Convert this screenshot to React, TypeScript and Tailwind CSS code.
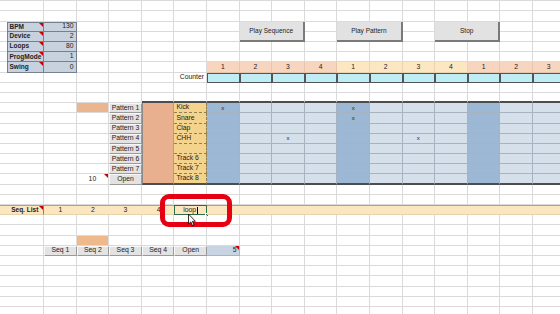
import React from 'react';

type Cell = {
  cls: string;
  text?: React.ReactNode;
  tri?: boolean;
  extra?: React.ReactNode;
};

const labels = ['BPM', 'Device', 'Loops', 'ProgMode', 'Swing'];
const values = ['130', '2', '80', '1', '0'];
const tracks = ['Kick', 'Snare', 'Clap', 'CHH', '', 'Track 6', 'Track 7', 'Track 8'];
const marks = ['10:7', '10:11', '11:11', '13:9', '13:13'];

const grid = 'border-r border-b border-[#dadada]';
const btn =
  'justify-center bg-[#e3e3e3] border-t border-l border-r border-b border-t-[#f8f8f8] border-l-[#f8f8f8] border-r-[#9a9a9a] border-b-[#9a9a9a]';
const band = 'bg-[#fbe6c0] border-t border-b border-t-[#aea38e] border-b-[#e5d3ae]';

// columns: 0 = sliver, 1 = A, 2 = B ... 6 = F, 7..17 = G..Q
// rows: -1 = sliver at the top, 0..30
function cellAt(r: number, c: number): Cell | null {
  // covered by merged cells
  if ((r === 2 || r === 3) && (c === 9 || c === 12 || c === 15)) return null;
  if (r === 3 && (c === 8 || c === 11 || c === 14)) return null;
  if (c === 5 && r >= 11 && r <= 17) return null;

  if (r === 20) {
    if (c === 1) return { cls: `${band} border-r border-r-[#8a7f6c] justify-center font-bold text-[6.5px]`, text: 'Seq. List', tri: true };
    if (c >= 2 && c <= 4) return { cls: `${band} justify-center`, text: String(c - 1) };
    if (c === 5) return { cls: `${band} justify-center pl-[1px]`, text: '4' };
    if (c === 6)
      return {
        cls: 'bg-[#fbe6c0] border-[1.5px] border-[#2f6b43] justify-center',
        text: (
          <>
            loop<span className="ml-px inline-block w-px h-[7px] bg-black" />
          </>
        ),
        extra: <span className="absolute -right-[3px] -bottom-[3px] w-[4px] h-[4px] bg-[#2f6b43] border border-white" />,
      };
    return { cls: band };
  }

  if (c === 0) return { cls: 'border-b border-[#dadada]' };
  if (r === -1) return { cls: grid };

  if (r === 2 && (c === 8 || c === 11 || c === 14)) {
    const label = c === 8 ? 'Play Sequence' : c === 11 ? 'Play Pattern' : 'Stop';
    return {
      cls: 'col-span-2 row-span-2 justify-center text-[6.5px] bg-[#e2e2e2] border-r-2 border-b-2 border-r-[#7a7a7a] border-b-[#7a7a7a]',
      text: label,
    };
  }

  if (r >= 2 && r <= 6 && c === 1)
    return {
      cls: `bg-[#c8d2df] border-l border-r border-b border-[#76818f] justify-start pl-[2px] font-bold text-[6.5px] ${r === 2 ? 'border-t' : ''}`,
      text: labels[r - 2],
      tri: true,
    };
  if (r >= 2 && r <= 6 && c === 2)
    return {
      cls: `bg-[#c8d2df] border-r border-b border-[#76818f] justify-end pr-[2px] ${r === 2 ? 'border-t' : ''}`,
      text: values[r - 2],
    };

  if (r === 6 && c >= 7) {
    const yellow = Math.floor((c - 7) / 4) === 1;
    return {
      cls: `${yellow ? 'bg-[#fde7c3] border-[#ecd4b0]' : 'bg-[#f8d5be] border-[#e8c4ad]'} border-r border-b justify-center`,
      text: String(((c - 7) % 4) + 1),
    };
  }

  if (r === 7 && c === 6) return { cls: `${grid} justify-end pr-[2px]`, text: 'Counter' };
  if (r === 7 && c >= 7) return { cls: 'bg-[#bfedf6] border border-[#555555]' };

  if (r === 9 && c >= 5) return { cls: 'border-r border-b-2 border-r-[#dadada] border-b-[#4d4d4d]' };

  if (r >= 10 && r <= 17) {
    if (c === 3 && r === 10) return { cls: `${grid} bg-[#ebb68f]` };
    if (c === 3 && r === 17) return { cls: `${grid} justify-center`, text: '10', tri: true };
    if (c === 4) return { cls: btn, text: r === 17 ? 'Open' : `Pattern ${r - 9}` };
    if (c === 5)
      return {
        cls: 'row-span-8 bg-[#e8b08e] border-l border-r border-b-2 border-l-[#8a8a8a] border-r-[#c09a80] border-b-[#4d4d4d]',
      };
    if (c === 6)
      return {
        cls:
          r === 17
            ? 'bg-[#f4d38c] border-r border-b-2 border-dashed border-r-[#8f7f55] border-b-[#4d4d4d] [border-bottom-style:solid] justify-start pl-[2px]'
            : 'bg-[#f4d38c] border-r border-b border-dashed border-[#8f7f55] justify-start pl-[2px]',
        text: tracks[r - 10],
      };
    if (c >= 7) {
      const dark = (c - 7) % 4 === 0;
      const bg = dark ? 'bg-[#9db8d4]' : 'bg-[#d5e0eb]';
      const edge =
        r === 17
          ? 'border-r border-b-2 border-r-[#a7b3c0] border-b-[#4d4d4d]'
          : 'border-r border-b border-[#a7b3c0]';
      return {
        cls: `${bg} ${edge} justify-center text-[6px]`,
        text: marks.includes(`${r}:${c}`) ? 'x' : undefined,
      };
    }
  }

  if (r === 23 && c === 3) return { cls: `${grid} bg-[#efb98c]` };
  if (r === 24 && c >= 2 && c <= 6) return { cls: btn, text: c === 6 ? 'Open' : `Seq ${c - 1}` };
  if (r === 24 && c === 7)
    return { cls: 'bg-[#c9d4e2] border-r border-b border-[#a9b4c2] justify-end pr-[2px]', text: '5', tri: true };

  return { cls: grid };
}

function Tri() {
  return (
    <span className="absolute top-0 right-0 w-0 h-0 border-t-[4px] border-l-[4px] border-t-[#c80000] border-l-transparent" />
  );
}

export default function App() {
  const cells: React.ReactNode[] = [];
  for (let r = -1; r <= 30; r++) {
    for (let c = 0; c < 18; c++) {
      const cell = cellAt(r, c);
      if (!cell) continue;
      cells.push(
        <div
          key={`${r}-${c}`}
          className={`relative flex items-center min-w-0 whitespace-nowrap ${cell.cls}`}
        >
          {cell.text}
          {cell.tri && <Tri />}
          {cell.extra}
        </div>
      );
    }
  }

  return (
    <div className="relative w-[560px] h-[314px] overflow-hidden bg-white font-['Liberation_Sans',Arial,sans-serif] text-[6.8px] leading-none text-[#222]">
      <div className="grid grid-cols-[6.5px_37.5px_repeat(16,32.6px)] grid-rows-[1.3px_repeat(31,10.2px)]">
        {cells}
      </div>

      {/* red highlight drawn over the sheet */}
      <div className="absolute left-[160px] top-[194px] w-[72px] h-[33px] border-[5px] border-[#e60012] rounded-[9px]" />

      {/* mouse pointer */}
      <svg className="absolute left-[187px] top-[213px]" width="10" height="14" viewBox="0 0 10 14">
        <path d="M1.5 1 L1.5 11 L3.8 8.9 L5.5 12.6 L7 12 L5.4 8.3 L8.4 8.3 Z" fill="#fff" stroke="#000" strokeWidth="0.8" strokeLinejoin="round" />
      </svg>
    </div>
  );
}
